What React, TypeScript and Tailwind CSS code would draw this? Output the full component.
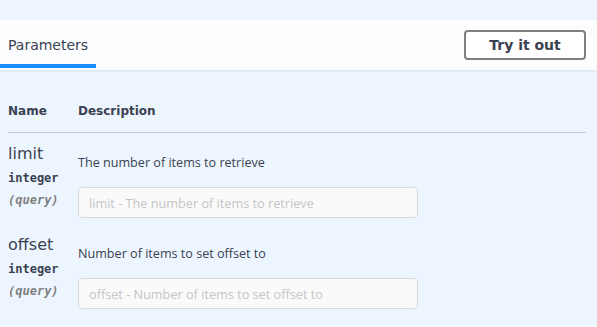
const sans = "font-['DejaVu_Sans',sans-serif]";
const open = "font-['Open_Sans',sans-serif]";
const mono = "font-['DejaVu_Sans_Mono',monospace]";

type Param = { name: string; type: string; where: string; description: string };

const params: Param[] = [
  { name: 'limit', type: 'integer', where: 'query', description: 'The number of items to retrieve' },
  { name: 'offset', type: 'integer', where: 'query', description: 'Number of items to set offset to' },
];

function ParamRow({ p }: { p: Param }) {
  return (
    <div className="flex">
      <div className="w-[70px] shrink-0">
        <div className={`${sans} text-[16px] leading-[20px] text-[#3b4151]`}>{p.name}</div>
        <div className={`${mono} mt-[6px] text-[12px] leading-[16px] font-bold text-[#3b4151]`}>{p.type}</div>
        <div className={`${mono} mt-[6px] text-[12px] leading-[16px] italic font-bold text-[#808080]`}>({p.where})</div>
      </div>
      <div className="flex-1 pt-[10px]">
        <p className={`${open} text-[12.6px] leading-[18px] text-[#3b4151]`}>{p.description}</p>
        <input
          className={`${open} mt-[15px] block w-[340px] h-[31px] rounded-[4px] border border-[#d9d9d9] bg-[#fafafa] px-[10px] text-[12.7px] text-[#3b4151] placeholder:text-[#c5c5c5] outline-none`}
          placeholder={`${p.name} - ${p.description}`}
        />
      </div>
    </div>
  );
}

export default function App() {
  return (
    <div className="w-[597px] h-[327px] overflow-hidden bg-[#edf6ff] pt-[20px]">
      <div className="h-[50px] flex items-center justify-between bg-[#fcfdff] shadow-[0_1px_2px_rgba(0,0,0,0.1)] pl-[8px] pr-[11px] relative">
        <div className="relative h-full flex items-center">
          <h4 className={`${sans} text-[14px] text-[#3b4151]`}>Parameters</h4>
          <span className="absolute left-[-8px] bottom-[2px] w-[96px] h-[4px] bg-[#1890ff]" />
        </div>
        <button className={`${sans} w-[122px] h-[30px] rounded-[4px] border-2 border-[#808080] bg-white text-[14px] font-bold text-[#3b4151]`}>
          Try it out
        </button>
      </div>
      <div className="px-[8px] pr-[11px]">
        <div className={`${sans} flex mt-[32px] pb-[12px] border-b border-[#c5ccd6] text-[12px] font-bold text-[#3b4151]`}>
          <div className="w-[70px]">Name</div>
          <div>Description</div>
        </div>
        <div className="pt-[11px] flex flex-col gap-[17px]">
          {params.map((p) => (
            <ParamRow key={p.name} p={p} />
          ))}
        </div>
      </div>
    </div>
  );
}
